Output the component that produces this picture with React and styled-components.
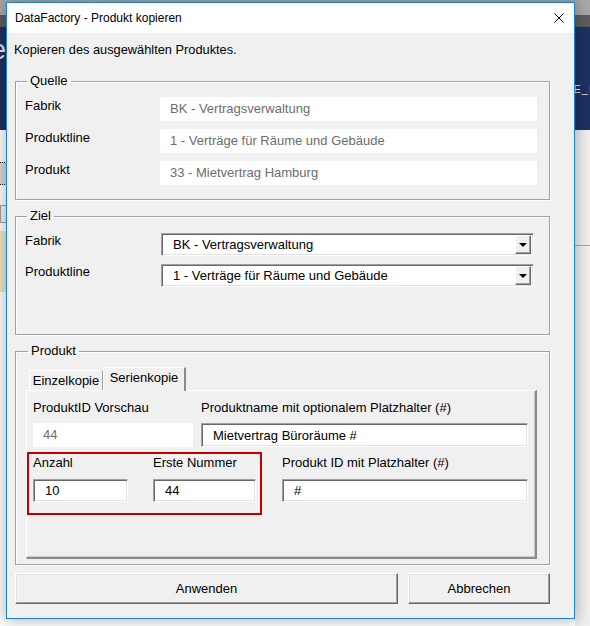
import React from 'react';
import styled, { createGlobalStyle } from 'styled-components';

const GlobalStyle = createGlobalStyle`
  html, body {
    margin: 0;
    padding: 0;
    background: #f0f0f0;
  }
  * {
    box-sizing: border-box;
  }
`;

const Backdrop = styled.div`
  position: relative;
  width: 590px;
  height: 626px;
  overflow: hidden;
  display: flex;
  flex-direction: column;
  background: #f0f0f0;
  font-family: "Liberation Sans", Arial, sans-serif;
`;

const TopStrip = styled.div`
  height: 15px;
  background: #a9a9a9;
`;

const ToolStrip = styled.div`
  height: 12px;
  background: #5e5e5e;
`;

const AppHeader = styled.div`
  height: 103px;
  background: #1e3163;
  display: flex;
  justify-content: space-between;
  align-items: flex-start;
  color: #e4e8f0;
`;

const HeaderWord = styled.span`
  font-size: 27px;
  line-height: 27px;
  margin: 10px 0 0 -9px;
`;

const HeaderCode = styled.span`
  font-size: 11px;
  margin-top: 56px;
  margin-right: -3px;
  letter-spacing: 1px;
`;

const Workspace = styled.div`
  flex: 1;
  display: flex;
`;

const LeftPane = styled.div`
  flex: 1;
  background: #fff;
  display: flex;
  flex-direction: column;
`;

const DottedBand = styled.div`
  margin-top: 32px;
  height: 23px;
  background: #dadada;
  border-top: 1px dotted #222;
  border-bottom: 1px dotted #222;
`;

const SmallBox = styled.div`
  margin-top: 20px;
  height: 18px;
  border: 1px solid #a0a0a0;
  background: #f4f4f4;
`;

const TanBlock = styled.div`
  margin-top: 8px;
  height: 62px;
  background: #f1e7cb;
  border-bottom: 1px solid #fff;
`;

const RightPane = styled.div`
  width: 15px;
  background: #f0f0f0;
`;

const PaneLine = styled.div`
  margin-top: 115px;
  height: 1px;
  background: #a8a8a8;
`;

/* dialog floats over the application behind it */
const Dialog = styled.div`
  position: absolute;
  left: 6px;
  top: 2px;
  width: 569px;
  height: 617px;
  border: 1px solid #1883d7;
  background: #f0f0f0;
  box-shadow: 0 0 14px 2px rgba(0, 0, 0, 0.28);
  display: flex;
  flex-direction: column;
`;

const TitleBar = styled.div`
  height: 30px;
  background: #fff;
  display: flex;
  align-items: center;
  padding: 0 10px 0 8px;
  font-size: 12px;
  color: #000;
`;

const CloseIcon = styled.svg`
  margin-left: auto;
  width: 10px;
  height: 10px;
`;

const Body = styled.div`
  flex: 1;
  display: flex;
  flex-direction: column;
  padding: 9px 24px 14px 8px;
  font-size: 13px;
  color: #000;
`;

const Intro = styled.div`
  font-size: 12.8px;
  line-height: 16px;
  margin-left: -1px;
  margin-bottom: 15px;
`;

const Group = styled.fieldset`
  margin: 0 0 8px 0;
  min-width: 0;
  border: 1px solid #a0a0a0;
  box-shadow: 1px 1px 0 #fff, inset 1px 1px 0 #fff;
  padding: ${(p) => p.$pad};
`;

const Legend = styled.legend`
  font-size: 13px;
  line-height: 16px;
  padding: 0 3px;
  margin-left: 2px;
`;

const FormGrid = styled.div`
  display: grid;
  grid-template-columns: ${(p) => p.$label}px 1fr;
  row-gap: 8px;
`;

const Label = styled.div`
  font-size: 13px;
  line-height: 16px;
  padding-top: ${(p) => p.$top || 0}px;
  white-space: nowrap;
`;

const ReadOnly = styled.div`
  height: 24px;
  background: #fff;
  color: #6d6d6d;
  font-size: 13px;
  line-height: 24px;
  padding-left: 10px;
  white-space: nowrap;
`;

const Sunken = styled.div`
  height: ${(p) => p.$h || 23}px;
  background: #fff;
  border: 1px solid;
  border-color: #a0a0a0 #fff #fff #a0a0a0;
  box-shadow: inset 1px 1px 0 #696969, inset -1px -1px 0 #e3e3e3;
  display: flex;
  align-items: center;
  padding-left: 11px;
  font-size: 13px;
  white-space: nowrap;
`;

const ComboBox = styled(Sunken)`
  padding-right: 2px;
`;

const ComboText = styled.span`
  flex: 1;
`;

const DropButton = styled.div`
  width: 16px;
  height: 19px;
  background: #f0f0f0;
  border: 1px solid;
  border-color: #fff #696969 #696969 #fff;
  box-shadow: inset -1px -1px 0 #a0a0a0;
  display: flex;
  align-items: center;
  justify-content: center;
`;

const Arrow = styled.div`
  width: 0;
  height: 0;
  border-left: 4px solid transparent;
  border-right: 4px solid transparent;
  border-top: 4px solid #000;
  margin-right: 1px;
`;

const TabStrip = styled.div`
  display: flex;
  align-items: flex-end;
  margin-left: 3px;
  position: relative;
  z-index: 1;
`;

const Tab = styled.div`
  height: ${(p) => (p.$active ? 24 : 20)}px;
  width: ${(p) => p.$w}px;
  margin-bottom: ${(p) => (p.$active ? -1 : 0)}px;
  background: #f0f0f0;
  border-top: 1px solid #fff;
  border-left: 1px solid #fff;
  border-right: ${(p) => (p.$active ? '2px solid #8a8a8a' : '1px solid #a0a0a0')};
  font-size: 13px;
  line-height: ${(p) => (p.$active ? 20 : 19)}px;
  text-align: center;
  white-space: nowrap;
`;

const TabPanel = styled.div`
  height: 169px;
  border-top: 1px solid #fff;
  border-left: 1px solid #fff;
  border-right: 2px solid #8a8a8a;
  border-bottom: 2px solid #8a8a8a;
  box-shadow: inset -1px -1px 0 #c8c8c8;
  padding: 9px 0 0 6px;
  display: flex;
  flex-direction: column;
`;

const Row = styled.div`
  display: flex;
  gap: ${(p) => p.$gap || 0}px;
  margin-top: ${(p) => p.$top || 0}px;
  align-items: flex-start;
`;

const Field = styled.div`
  width: ${(p) => p.$w}px;
  display: flex;
  flex-direction: column;
  gap: ${(p) => p.$gap || 7}px;
  margin-top: ${(p) => p.$top || 0}px;
`;

const Highlight = styled.div`
  display: flex;
  gap: 25px;
  margin-left: -6px;
  border: 2px solid #c00000;
  padding: 1px 4px 11px 4px;
`;

const ButtonRow = styled.div`
  display: flex;
  gap: 10px;
`;

const Button = styled.button`
  flex: ${(p) => (p.$w ? 'none' : 1)};
  width: ${(p) => (p.$w ? `${p.$w}px` : 'auto')};
  height: 31px;
  background: #f0f0f0;
  border: 1px solid;
  border-color: #fff #696969 #696969 #fff;
  box-shadow: inset -1px -1px 0 #a0a0a0, inset 1px 1px 0 #e3e3e3;
  font-family: "Liberation Sans", Arial, sans-serif;
  font-size: 13px;
  color: #000;
  padding: 0;
`;

const Combo = ({ children }) => (
  <ComboBox>
    <ComboText>{children}</ComboText>
    <DropButton>
      <Arrow />
    </DropButton>
  </ComboBox>
);

export default function App() {
  return (
    <>
      <GlobalStyle />
      <Backdrop>
        <TopStrip />
        <ToolStrip />
        <AppHeader>
          <HeaderWord>e</HeaderWord>
          <HeaderCode>E_I</HeaderCode>
        </AppHeader>
        <Workspace>
          <LeftPane>
            <DottedBand />
            <SmallBox />
            <TanBlock />
          </LeftPane>
          <RightPane>
            <PaneLine />
          </RightPane>
        </Workspace>

        <Dialog>
          <TitleBar>
            DataFactory - Produkt kopieren
            <CloseIcon viewBox="0 0 10 10">
              <path d="M0.5 0.5 L9.5 9.5 M9.5 0.5 L0.5 9.5" stroke="#000" strokeWidth="1" fill="none" />
            </CloseIcon>
          </TitleBar>
          <Body>
            <Intro>Kopieren des ausgewählten Produktes.</Intro>

            <Group $pad="8px 12px 14px 9px">
              <Legend>Quelle</Legend>
              <FormGrid $label={135}>
                <Label $top={1}>Fabrik</Label>
                <ReadOnly>BK - Vertragsverwaltung</ReadOnly>
                <Label $top={1}>Produktline</Label>
                <ReadOnly>1 - Verträge für Räume und Gebäude</ReadOnly>
                <Label $top={1}>Produkt</Label>
                <ReadOnly>33 - Mietvertrag Hamburg</ReadOnly>
              </FormGrid>
            </Group>

            <Group $pad="9px 15px 47px 9px">
              <Legend>Ziel</Legend>
              <FormGrid $label={136}>
                <Label>Fabrik</Label>
                <Combo>BK - Vertragsverwaltung</Combo>
                <Label>Produktline</Label>
                <Combo>1 - Verträge für Räume und Gebäude</Combo>
              </FormGrid>
            </Group>

            <Group $pad="8px 12px 5px 10px">
              <Legend>Produkt</Legend>
              <TabStrip>
                <Tab $w={74}>Einzelkopie</Tab>
                <Tab $w={83} $active>Serienkopie</Tab>
              </TabStrip>
              <TabPanel>
                <Row $gap={8}>
                  <Field $w={160}>
                    <Label>ProduktID Vorschau</Label>
                    <ReadOnly>44</ReadOnly>
                  </Field>
                  <Field $w={327}>
                    <Label>Produktname mit optionalem Platzhalter (#)</Label>
                    <Sunken $h={24}>Mietvertrag Büroräume #</Sunken>
                  </Field>
                </Row>
                <Row $gap={20} $top={5}>
                  <Highlight>
                    <Field $w={95} $gap={8}>
                      <Label>Anzahl</Label>
                      <Sunken>10</Sunken>
                    </Field>
                    <Field $w={103} $gap={8}>
                      <Label>Erste Nummer</Label>
                      <Sunken>44</Sunken>
                    </Field>
                  </Highlight>
                  <Field $w={246} $gap={8} $top={3}>
                    <Label>Produkt ID mit Platzhalter (#)</Label>
                    <Sunken>#</Sunken>
                  </Field>
                </Row>
              </TabPanel>
            </Group>

            <ButtonRow>
              <Button>Anwenden</Button>
              <Button $w={142}>Abbrechen</Button>
            </ButtonRow>
          </Body>
        </Dialog>
      </Backdrop>
    </>
  );
}
